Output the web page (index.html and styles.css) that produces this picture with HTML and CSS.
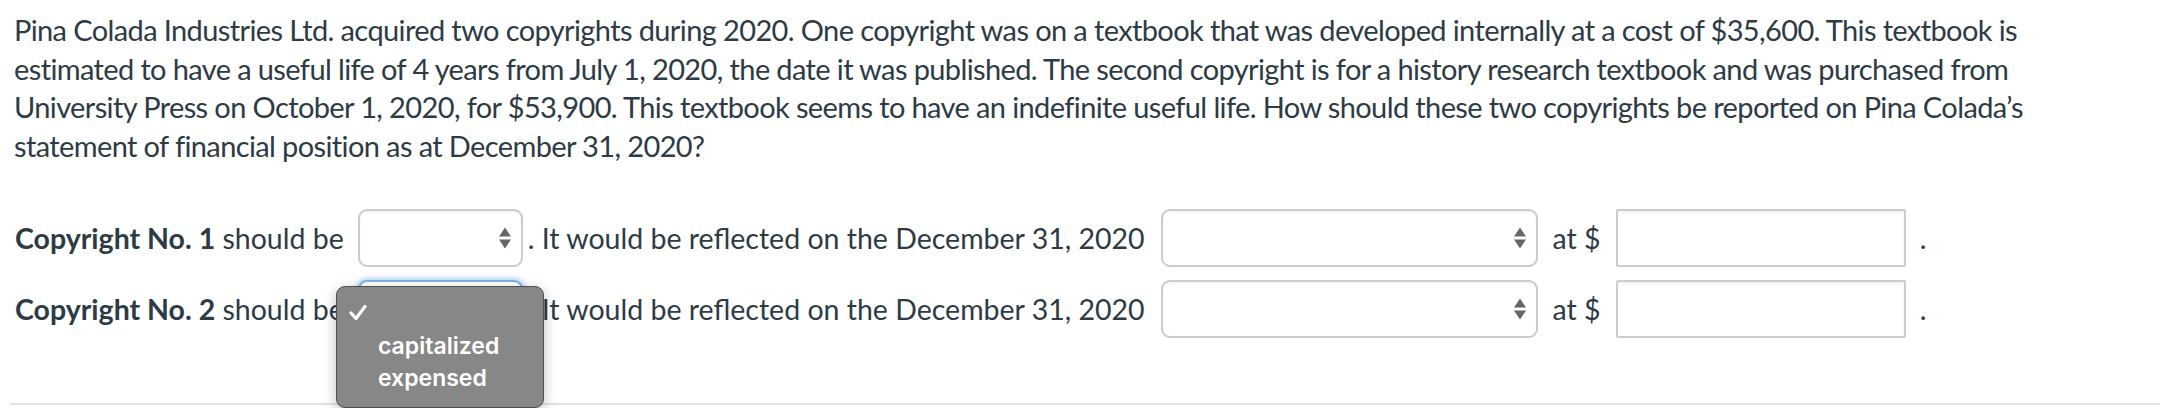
FILE: index.html
```html
<!DOCTYPE html>
<html>
<head>
<meta charset="utf-8">
<link rel="stylesheet" href="styles.css">
</head>
<body>
<div class="page">
  <p class="question">Pina Colada Industries Ltd. acquired two copyrights during 2020. One copyright was on a textbook that was developed internally at a cost of $35,600. This textbook is estimated to have a useful life of 4 years from July 1, 2020, the date it was published. The second copyright is for a history research textbook and was purchased from University Press on October 1, 2020, for $53,900. This textbook seems to have an indefinite useful life. How should these two copyrights be reported on Pina Colada’s statement of financial position as at December 31, 2020?</p>

  <div class="rows">
    <div class="row">
      <span class="label"><b>Copyright No. 1</b> should be</span>
      <div class="select small"><span class="arrows"><i class="up"></i><i class="down"></i></span></div>
      <span class="mid">. It would be reflected on the December 31, 2020</span>
      <div class="select big"><span class="arrows"><i class="up"></i><i class="down"></i></span></div>
      <span class="at">at $</span>
      <div class="input"></div>
      <span class="dot">.</span>
    </div>
    <div class="row">
      <span class="label"><b>Copyright No. 2</b> should be</span>
      <div class="select small focused"><span class="arrows"><i class="up"></i><i class="down"></i></span></div>
      <span class="mid">. It would be reflected on the December 31, 2020</span>
      <div class="select big"><span class="arrows"><i class="up"></i><i class="down"></i></span></div>
      <span class="at">at $</span>
      <div class="input"></div>
      <span class="dot">.</span>
    </div>
  </div>
  <div class="rule"></div>

  <div class="menu">
    <div class="opt"><svg class="check" width="18" height="17" viewBox="0 0 18 17"><path d="M2 9 L7 14.5 L16 2.5" fill="none" stroke="#fff" stroke-width="3.2" stroke-linecap="round" stroke-linejoin="round"/></svg></div>
    <div class="opt text">capitalized</div>
    <div class="opt text">expensed</div>
  </div>
</div>
</body>
</html>
```

FILE: styles.css
```css
html, body {
  margin: 0;
  padding: 0;
  background: #fff;
}
.page {
  position: relative;
  width: 2160px;
  height: 408px;
  overflow: hidden;
  font-family: Lato, "Liberation Sans", sans-serif;
  color: #2d3b45;
  font-size: 29px;
}
.question {
  margin: 0;
  padding: 11px 40px 0 14px;
  line-height: 38.6px;
  width: 2060px;
  letter-spacing: -0.62px;
}
.rows {
  display: flex;
  flex-direction: column;
  gap: 13px;
  padding: 44px 0 0 15px;
  font-size: 28.5px;
}
.row {
  display: flex;
  align-items: center;
  height: 58px;
}
.label b {
  font-weight: 700;
}
.label {
  margin-right: 14px;
}
.select {
  position: relative;
  box-sizing: border-box;
  height: 58px;
  border: 2px solid #cbcbcb;
  border-radius: 9px;
  background: #fff;
  box-shadow: inset 0 2px 2px rgba(0,0,0,0.04);
}
.select.small { width: 165px; }
.select.big { width: 377px; }
.select.focused {
  border-color: #7fb0e3;
  box-shadow: 0 0 5px 2px rgba(100,160,230,0.45);
}
.arrows {
  position: absolute;
  right: 10px;
  top: 50%;
  transform: translateY(-50%);
  display: flex;
  flex-direction: column;
  gap: 3px;
}
.arrows i {
  display: block;
  width: 0;
  height: 0;
  border-left: 6px solid transparent;
  border-right: 6px solid transparent;
}
.arrows .up { border-bottom: 9px solid #666; }
.arrows .down { border-top: 9px solid #666; }
.mid {
  margin-left: 5px;
  margin-right: 16px;
}
.at {
  margin-left: 15px;
  margin-right: 15px;
}
.input {
  box-sizing: border-box;
  width: 290px;
  height: 58px;
  border: 2px solid #cccccc;
  border-radius: 2px;
  box-shadow: inset 0 2px 2px rgba(0,0,0,0.05);
}
.dot {
  margin-left: 14px;
}
.rule {
  position: absolute;
  left: 10px;
  right: 0;
  top: 403px;
  height: 2px;
  background: #e2e2e2;
}
.menu {
  position: absolute;
  left: 336px;
  top: 286px;
  width: 208px;
  height: 122px;
  box-sizing: border-box;
  background: #878787;
  border: 1.5px solid #505050;
  border-radius: 9px;
  box-shadow: 0 4px 14px rgba(0,0,0,0.25);
  font-family: Inter, Roboto, sans-serif;
  font-weight: 600;
  font-size: 23px;
  color: #fff;
  padding-top: 8px;
}
.opt {
  height: 32px;
  display: flex;
  align-items: center;
}
.opt:first-child {
  height: 35px;
}
.opt.text {
  padding-left: 41px;
}
.check {
  margin-left: 12px;
}
```
